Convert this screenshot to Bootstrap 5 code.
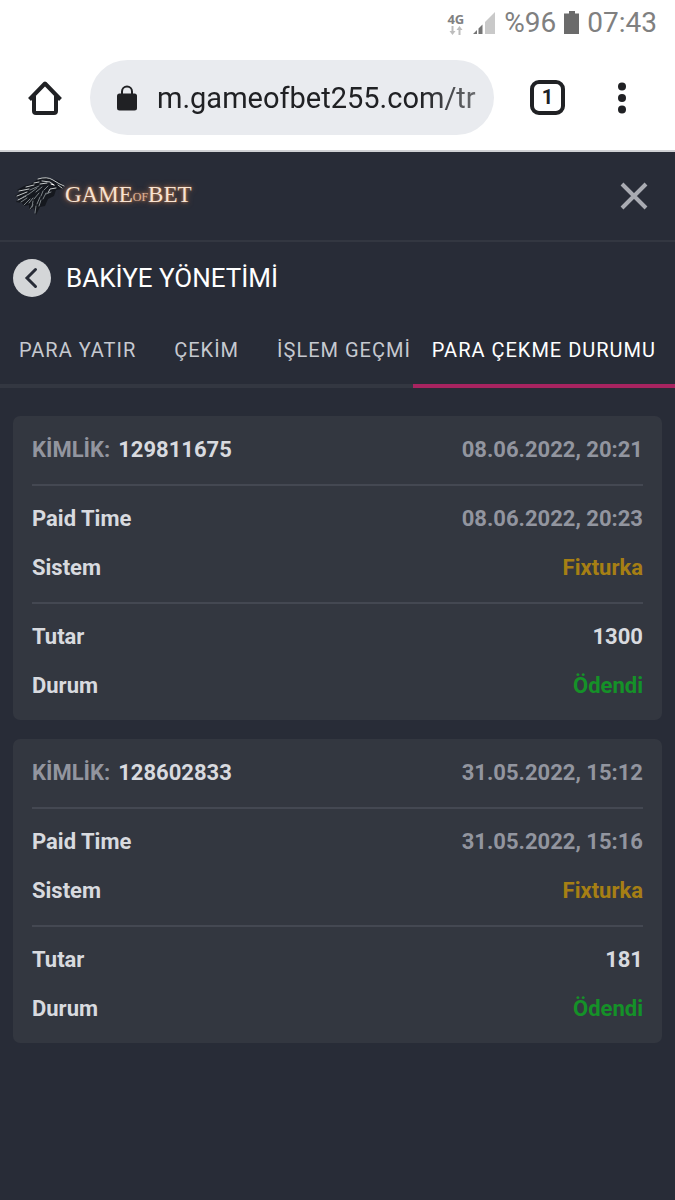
<!DOCTYPE html>
<html lang="tr">
<head>
<meta charset="utf-8">
<meta name="viewport" content="width=device-width, initial-scale=1">
<title>Para Çekme Durumu</title>
<link href="https://cdn.jsdelivr.net/npm/bootstrap@5.3.0/dist/css/bootstrap.min.css" rel="stylesheet">
<style>
  body { font-family: Roboto, "Liberation Sans", sans-serif; background: #282c37; color: #d8dadf; }
  svg { display: block; flex-shrink: 0; }
  .status-bar { height: 46px; padding: 0 18px; gap: 8px; font-size: 28px; color: #808080; }
  .net-type { font: 700 13px/14px "Noto Sans", sans-serif; }
  .browser-bar { padding: 14px 44px 15px 28px; border-bottom: 2px solid #d0d1d4; color: #202124; }
  .address { height: 75px; min-width: 0; padding: 0 14px 0 27px; gap: 20px; margin: 0 36px 0 27px; background: #e9ebef; }
  .address input { font-size: 29px; line-height: 40px; color: #202124; outline: 0;
    -webkit-mask-image: linear-gradient(to left, rgba(0,0,0,.6), #000 60px); mask-image: linear-gradient(to left, rgba(0,0,0,.6), #000 60px); }
  .icon-button { padding: 0; border: 0; background: none; color: inherit; }
  .tab-count { width: 35px; height: 35px; border: 4px solid #202124; border-radius: 9px; font: 700 20px/27px Roboto, sans-serif; }
  .site-head { height: 90px; padding: 0 27px 0 14px; border-bottom: 2px solid #333741; }
  .brand-text { font: 23px/30px "Liberation Serif", serif; color: #f8e3d2; text-shadow: 0 0 6px #b06f48, 0 0 3px #b57a58; }
  .brand-of { font-size: 12px; color: #e0b498; }
  .title-row { height: 72px; padding: 0 13px; gap: 15px; }
  .page-title { font-size: 26px; line-height: 32px; font-weight: 400; color: #fff; }
  .tab-link { padding: 2px 19px 0; font-size: 20px; line-height: 68px; letter-spacing: 1px; color: #c6c9d0; text-decoration: none; white-space: nowrap; border-bottom: 4px solid #333741; }
  .tab-link.active { color: #fff; border-color: #a82460; }
  .tab-link.clipped { padding-right: 0; }
  .records { padding: 28px 13px; gap: 19px; }
  .record { padding: 0 19px; border: 0; border-radius: 7px; background: #333740; color: #d8dadf; font-size: 22px; line-height: 30px; font-weight: 700; }
  .record-part { padding: 18px 0 19px; gap: 19px; border-bottom: 2px solid #444852; }
  .record-part:first-child { padding-top: 19px; }
  .record-part:last-child { border: 0; }
  .muted { color: #92959f; }
  .system { color: #a67f14; }
  .paid { color: #159128; }
</style>
</head>
<body class="d-flex flex-column min-vh-100">

<div class="bg-white">
  <div class="status-bar d-flex align-items-center justify-content-end">
    <div class="text-center">
      <div class="net-type">4G</div>
      <svg class="mx-auto" width="14" height="9" viewBox="0 0 14 9" fill="#bdbdbd"><path d="M2.500 0h2v5h2l-3 4-3-4h2zM9.500 9h2V4h2l-3-4-3 4h2z"/></svg>
    </div>
    <svg width="24" height="24" viewBox="0 0 24 24"><path d="M23 1v22H13V11z" fill="#c9c9c9"/><path d="M10.500 13.500V23h-4v-5.500zM5 19v4H1z" fill="#757575"/></svg>
    <span>%96</span>
    <svg width="15" height="24" viewBox="0 0 15 24"><path d="M0 2.500h5V0h6v2.500h4V23H0z" fill="#6b6b6b"/></svg>
    <span>07:43</span>
  </div>
  <div class="browser-bar d-flex align-items-center">
    <button class="icon-button" type="button" aria-label="Ana sayfa">
      <svg width="35" height="36" viewBox="0 0 35 36" fill="none" stroke="#202124" stroke-width="4" stroke-linejoin="round"><path d="M1.500 19.500 17 3.500l15.500 16"/><path d="M6 16v15q0 2 2 2h18q2 0 2-2V16"/></svg>
    </button>
    <div class="address d-flex align-items-center rounded-pill flex-fill">
      <svg width="20" height="26" viewBox="0 0 20 26"><path d="M5 10V6.500a5 5 0 0 1 10 0V10" fill="none" stroke="#202124" stroke-width="2"/><rect x="0" y="8.500" width="20" height="17" rx="2.500" fill="#202124"/></svg>
      <input class="border-0 bg-transparent p-0 flex-fill w-100" type="text" value="m.gameofbet255.com/tr" aria-label="Adres">
    </div>
    <div class="d-flex align-items-center gap-5">
      <button class="icon-button tab-count" type="button" aria-label="1 sekme">1</button>
      <button class="icon-button" type="button" aria-label="Menü">
        <svg width="18" height="32" viewBox="0 0 18 32" fill="#202124"><circle cx="9" cy="4.500" r="4"/><circle cx="9" cy="16" r="4"/><circle cx="9" cy="27.500" r="4"/></svg>
      </button>
    </div>
  </div>
</div>

<header class="site-head d-flex align-items-center justify-content-between">
  <a class="d-flex align-items-center text-decoration-none" href="#" aria-label="Game of Bet">
    <svg width="51" height="40" viewBox="0 0 51 40" fill="none" stroke-linecap="round">
      <path d="M50 10 45 5 38 3 32 1l-6 1-5 3-4 3-7 2-7 4 3 2-5 4 4 2-3 4 6 1 2 3 5-1v5l5-2 2 7 4-8 5-1 3-7 6-3 2-6 6-1z" fill="#15181e"/>
      <g stroke="#c4c8c9" stroke-width="1">
        <path d="M24 3q9-3 15 1t11 6M28 5l8 1 4 3M44 9l4 3M42 12l-6 1-2 4M26 8l7-1M20 7l5-1"/>
        <path d="M12 11l8-2M5 15l10-2M3 20l10-4M4 24l8-4"/>
      </g>
      <g stroke="#7b8286" stroke-width="1">
        <path d="M16 14l9-4M15 18l8-6M9 21l6-3M7 26l6-4M10 29l6-6M15 27l4-5M22 16l6-5M18 31l1-6M20 23l5-6M16 33l3-4M21 37l1-7M23 28l3-7M25 30l2-6M29 23l3-6M30 14l4-4M27 20l2-5M32 18l5-2"/>
      </g>
      <path d="M37 8l3 1" stroke="#fff"/>
    </svg>
    <span class="brand-text">GAME<span class="brand-of align-middle">OF</span>BET</span>
  </a>
  <button class="icon-button" type="button" aria-label="Kapat">
    <svg width="28" height="28" viewBox="0 0 28 28" stroke="#a9abb2" stroke-width="4"><path d="m2 2 24 24M26 2 2 26"/></svg>
  </button>
</header>

<main>
  <div class="title-row d-flex align-items-center">
    <button class="icon-button" type="button" aria-label="Geri">
      <svg width="38" height="38" viewBox="0 0 38 38"><circle cx="19" cy="19" r="19" fill="#d4d6d8"/><path d="m22.500 10.500-8.500 8.500 8.500 8.500" fill="none" stroke="#282c37" stroke-width="3" stroke-linecap="round"/></svg>
    </button>
    <h1 class="page-title m-0">BAKİYE YÖNETİMİ</h1>
  </div>

  <nav class="d-flex">
    <div class="d-flex flex-fill overflow-hidden">
      <a class="tab-link" href="#">PARA YATIR</a>
      <a class="tab-link" href="#">ÇEKİM</a>
      <a class="tab-link clipped flex-fill" href="#">İŞLEM GEÇMİ</a>
    </div>
    <a class="tab-link active flex-shrink-0" href="#" aria-current="page">PARA ÇEKME DURUMU</a>
  </nav>

  <div class="records d-flex flex-column">
    <section class="card record">
      <div class="record-part d-flex justify-content-between">
        <span class="d-flex gap-2"><span class="muted">KİMLİK:</span><span>129811675</span></span><span class="muted">08.06.2022, 20:21</span>
      </div>
      <div class="record-part d-flex flex-column">
        <div class="d-flex justify-content-between"><span>Paid Time</span><span class="muted">08.06.2022, 20:23</span></div>
        <div class="d-flex justify-content-between"><span>Sistem</span><span class="system">Fixturka</span></div>
      </div>
      <div class="record-part d-flex flex-column">
        <div class="d-flex justify-content-between"><span>Tutar</span><span>1300</span></div>
        <div class="d-flex justify-content-between"><span>Durum</span><span class="paid">Ödendi</span></div>
      </div>
    </section>
    <section class="card record">
      <div class="record-part d-flex justify-content-between">
        <span class="d-flex gap-2"><span class="muted">KİMLİK:</span><span>128602833</span></span><span class="muted">31.05.2022, 15:12</span>
      </div>
      <div class="record-part d-flex flex-column">
        <div class="d-flex justify-content-between"><span>Paid Time</span><span class="muted">31.05.2022, 15:16</span></div>
        <div class="d-flex justify-content-between"><span>Sistem</span><span class="system">Fixturka</span></div>
      </div>
      <div class="record-part d-flex flex-column">
        <div class="d-flex justify-content-between"><span>Tutar</span><span>181</span></div>
        <div class="d-flex justify-content-between"><span>Durum</span><span class="paid">Ödendi</span></div>
      </div>
    </section>
  </div>
</main>

<script src="https://cdn.jsdelivr.net/npm/bootstrap@5.3.0/dist/js/bootstrap.bundle.min.js"></script>
</body>
</html>
